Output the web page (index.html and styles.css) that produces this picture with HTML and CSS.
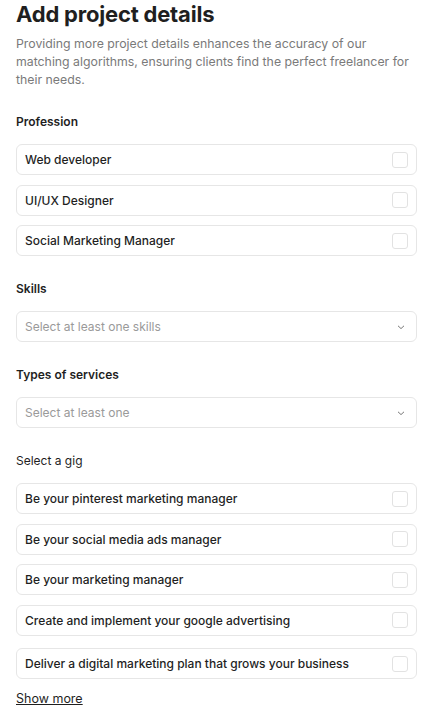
FILE: index.html
```html
<!DOCTYPE html>
<html lang="en">
<head>
    <meta charset="UTF-8">
    <meta name="viewport" content="width=device-width, initial-scale=1.0">
    <title>Add project details</title>
    <link rel="stylesheet" href="styles.css">
</head>
<body>
    <div class="container">
        <h1>Add project details</h1>
        <p class="intro">Providing more project details enhances the accuracy of our matching algorithms, ensuring clients find the perfect freelancer for their needs.</p>

        <div class="section">
            <div class="label">Profession</div>
            <div class="options">
                <label class="option"><span>Web developer</span><span class="check"></span></label>
                <label class="option"><span>UI/UX Designer</span><span class="check"></span></label>
                <label class="option"><span>Social Marketing Manager</span><span class="check"></span></label>
            </div>
        </div>

        <div class="section">
            <div class="label">Skills</div>
            <div class="select">
                <span>Select at least one skills</span>
                <svg width="10" height="10" viewBox="0 0 10 10"><path d="M2 3.8 L5 6.6 L8 3.8" fill="none" stroke="#777" stroke-width="1"/></svg>
            </div>
        </div>

        <div class="section">
            <div class="label">Types of services</div>
            <div class="select">
                <span>Select at least one</span>
                <svg width="10" height="10" viewBox="0 0 10 10"><path d="M2 3.8 L5 6.6 L8 3.8" fill="none" stroke="#777" stroke-width="1"/></svg>
            </div>
        </div>

        <div class="section">
            <div class="label light">Select a gig</div>
            <div class="options gigs">
                <label class="option"><span>Be your pinterest marketing manager</span><span class="check"></span></label>
                <label class="option"><span>Be your social media ads manager</span><span class="check"></span></label>
                <label class="option"><span>Be your marketing manager</span><span class="check"></span></label>
                <label class="option"><span>Create and implement your google advertising</span><span class="check"></span></label>
                <label class="option"><span>Deliver a digital marketing plan that grows your business</span><span class="check"></span></label>
            </div>
            <a class="more" href="#">Show more</a>
        </div>
    </div>
</body>
</html>
```
FILE: styles.css
```css
body {
    font-family: Inter, "Noto Sans", sans-serif;
    background-color: #ffffff;
    color: #1f1f1f;
    margin: 0;
    padding: 0;
}
.container {
    width: 401px;
    padding: 0 16px;
}
h1 {
    font-size: 22px;
    font-weight: 700;
    line-height: 28px;
    margin: 0;
    letter-spacing: -0.2px;
}
.intro {
    font-size: 12.3px;
    line-height: 18px;
    color: #7a7a7a;
    margin: 7px 0 0;
}
.section {
    margin-top: 25px;
}
.label {
    font-size: 12px;
    font-weight: 600;
    line-height: 16px;
    margin-bottom: 14px;
}
.label.light {
    font-weight: 400;
}
.options {
    display: flex;
    flex-direction: column;
    gap: 9.5px;
}
.gigs .option:last-child {
    margin-top: 3px;
}
.option, .select {
    display: flex;
    align-items: center;
    justify-content: space-between;
    height: 29px;
    padding: 0 8px;
    border: 1px solid #e6e6e6;
    border-radius: 6px;
    font-size: 12px;
    font-weight: 500;
}
.check {
    width: 14px;
    height: 14px;
    border: 1px solid #e2e2e2;
    border-radius: 3px;
}
.select {
    color: #9a9a9a;
    font-weight: 400;
    padding-right: 10px;
}
.more {
    display: inline-block;
    margin-top: 12px;
    font-size: 12.5px;
    color: #1f1f1f;
}
```
